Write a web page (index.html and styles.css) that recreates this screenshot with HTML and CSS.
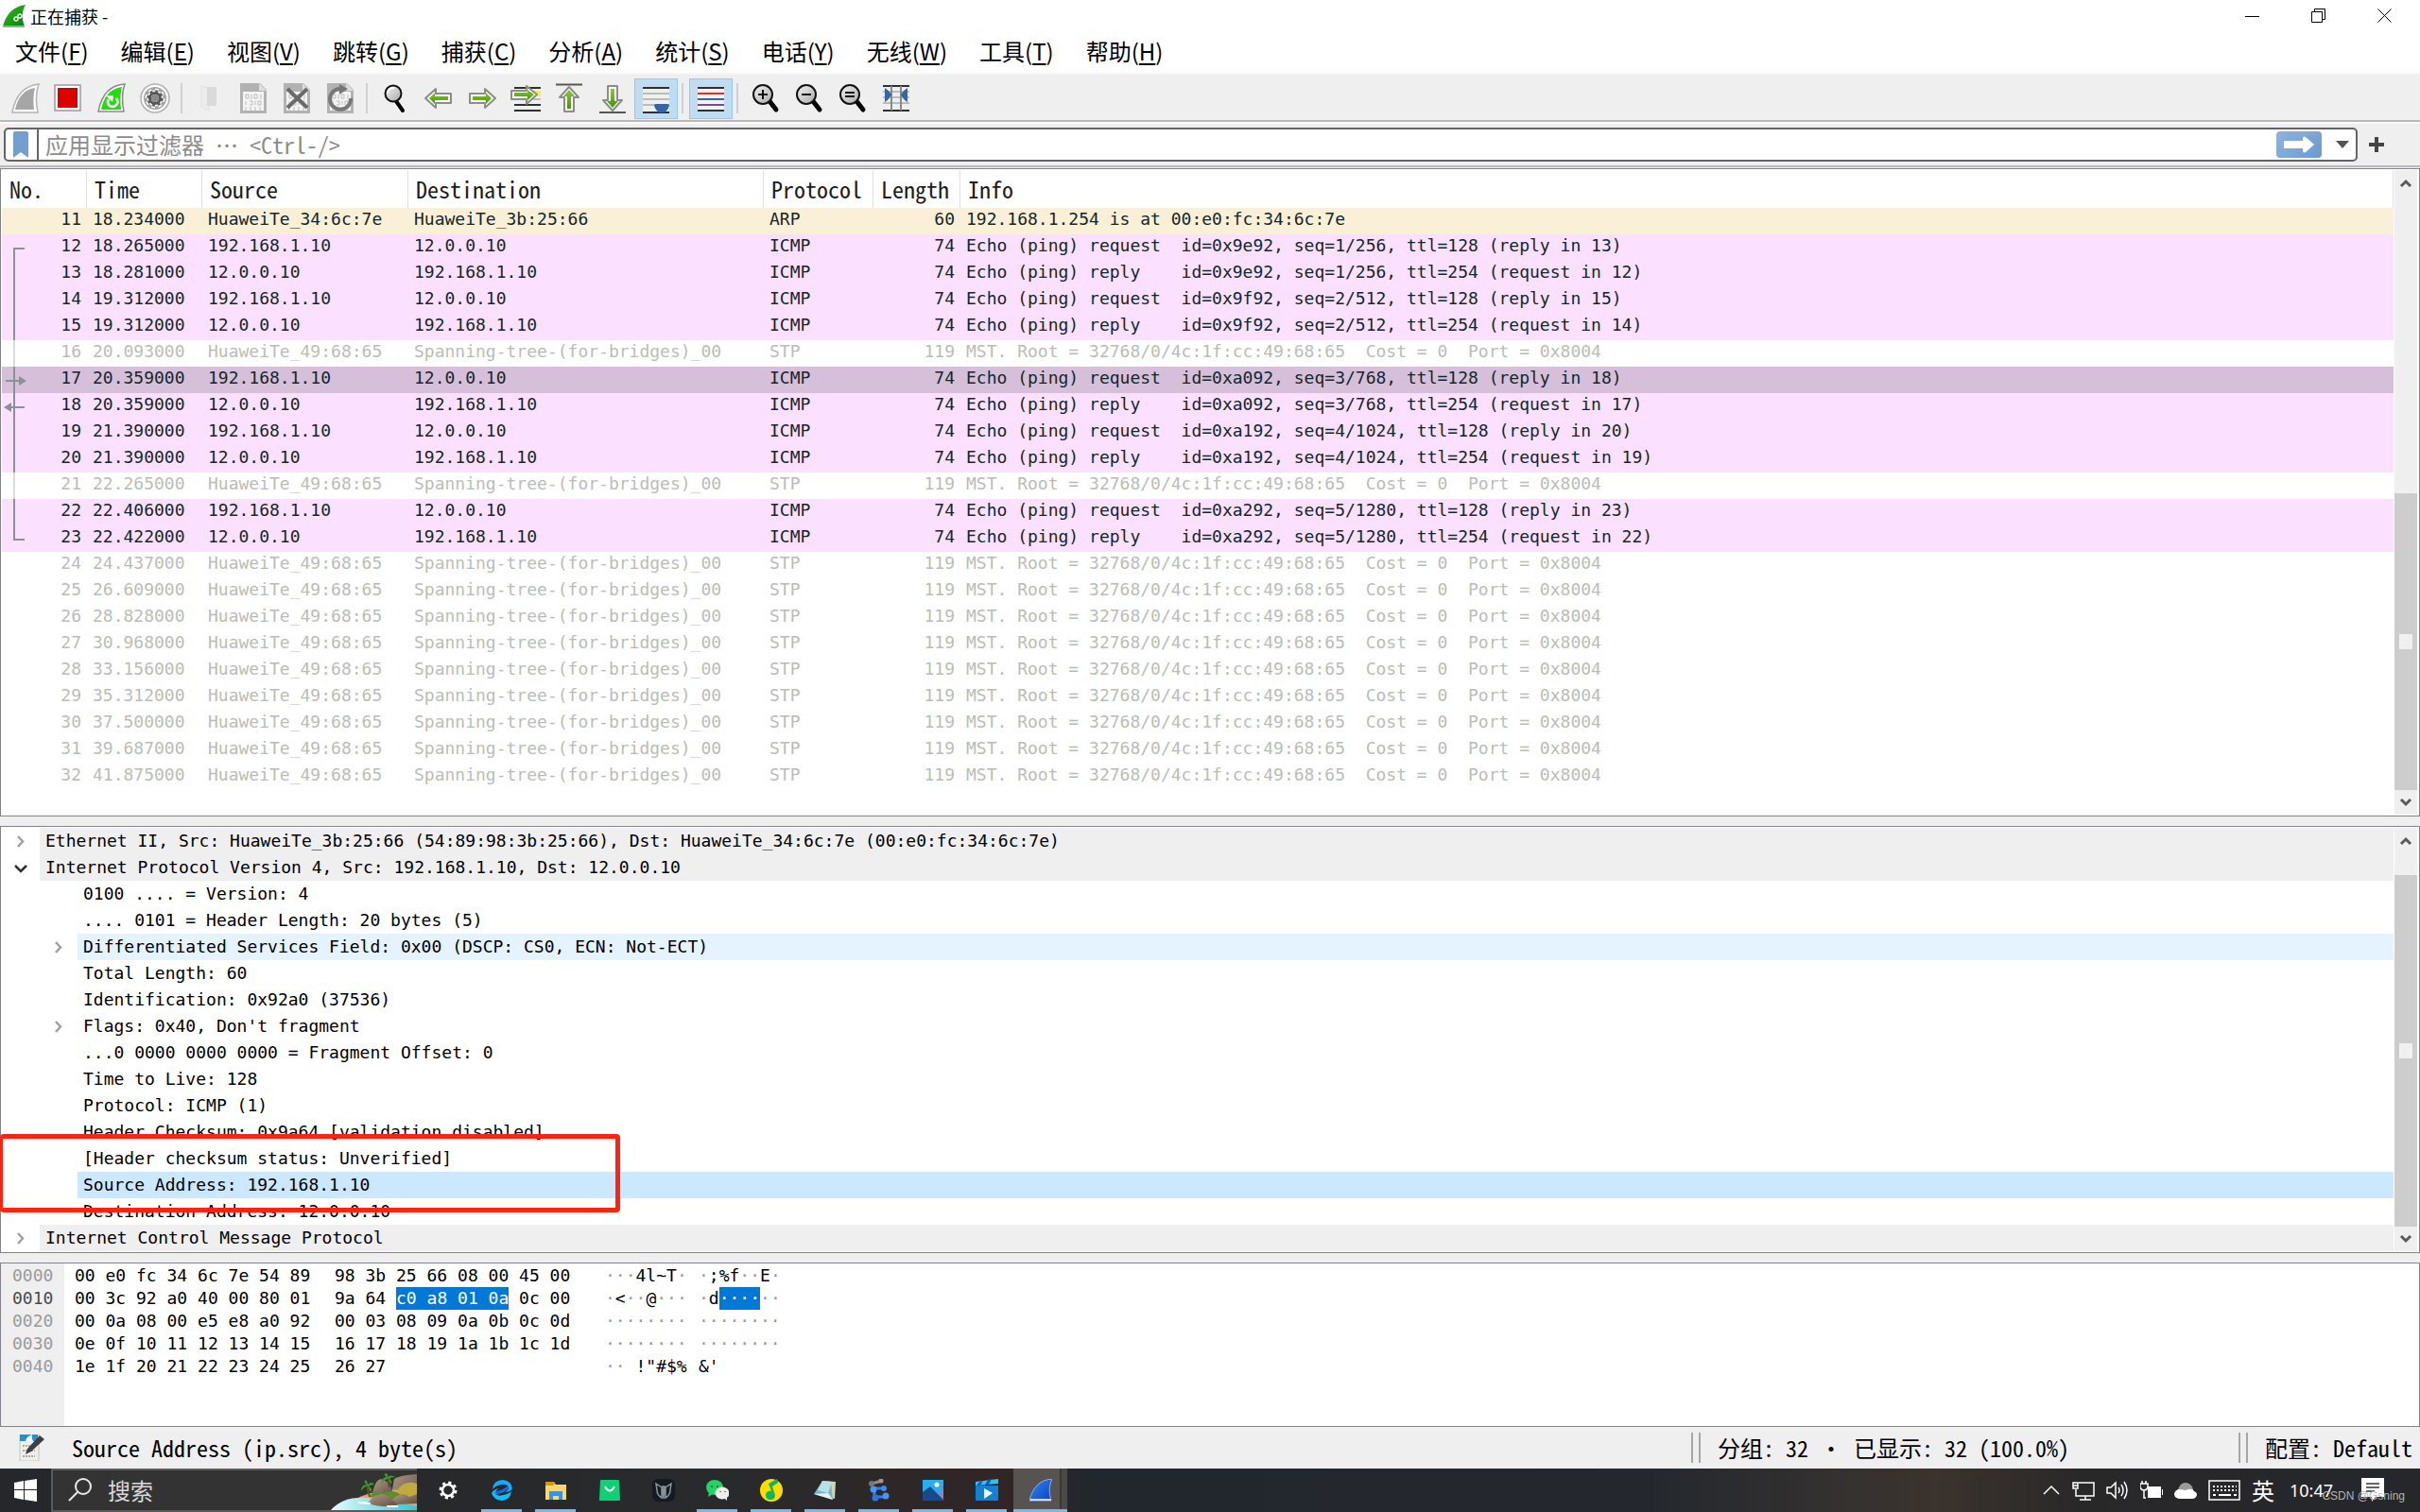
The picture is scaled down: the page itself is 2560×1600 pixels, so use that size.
FILE: index.html
```html
<!DOCTYPE html>
<html lang="zh-CN">
<head>
<meta charset="utf-8">
<title>正在捕获 -</title>
<link rel="stylesheet" href="styles.css">
</head>
<body>
<svg class="defs" aria-hidden="true">
  <defs>
    <linearGradient id="green" x1="0" y1="0" x2="0" y2="1"><stop offset="0" stop-color="#8fc43c"/><stop offset="1" stop-color="#3f9a00"/></linearGradient>
    <linearGradient id="lens" x1="0" y1="0" x2="1" y2="1"><stop offset="0" stop-color="#f4f4f4"/><stop offset="1" stop-color="#a8a8a8"/></linearGradient>
    <linearGradient id="finGreen" x1="0" y1="0" x2="1" y2="1"><stop offset="0" stop-color="#2fc21a"/><stop offset="1" stop-color="#0a7a12"/></linearGradient>
    <linearGradient id="finBlue" x1="0" y1="0" x2="1" y2="1"><stop offset="0" stop-color="#2f8af5"/><stop offset="1" stop-color="#0a3fc0"/></linearGradient>
    <linearGradient id="sea" x1="0" y1="0" x2="1" y2="0"><stop offset="0" stop-color="#e8fbfb"/><stop offset="1" stop-color="#2fc7d3"/></linearGradient>
    <linearGradient id="rock" x1="0" y1="0" x2="1" y2="1"><stop offset="0" stop-color="#b09a86"/><stop offset="1" stop-color="#5f4c40"/></linearGradient>
    <symbol id="up" viewBox="0 0 24 26"><path d="M7 17l5-5 5 5" fill="none" stroke="#5a5a5a" stroke-width="3"/></symbol>
    <symbol id="down" viewBox="0 0 24 26"><path d="M7 10l5 5 5-5" fill="none" stroke="#5a5a5a" stroke-width="3"/></symbol>
    <symbol id="closed" viewBox="0 0 20 28"><path d="M7 9l5 5.500-5 5.500" fill="none" stroke="#a0a0a0" stroke-width="2.500"/></symbol>
    <symbol id="open" viewBox="0 0 20 28"><path d="M4 12l6 6 6-6" fill="none" stroke="#303030" stroke-width="2.500"/></symbol>
    <symbol id="page" viewBox="0 0 32 32"><path d="M5 0h18l7 7v25H2V0z" fill="#b2b2b2"/><path d="M5 9h22v20H5z" fill="#f4f4f4"/><path d="M22 0l8 8h-8z" fill="#dedede"/><path d="M8 12h3v4H8zM14 12v5M17 12h3v4h-3zM24 12v5M8 19v4M12 19h3v4h-3M18 19v4M21 19h3v4h-3zM8 25v4M13 25v4M18 25v4M23 25v4" fill="none" stroke="#bcbcbc"/></symbol>
    <symbol id="glass" viewBox="0 0 32 32"><path d="M20 19l7 9" stroke="#000" stroke-width="5" stroke-linecap="round"/><circle cx="13" cy="12" r="10" fill="url(#lens)" stroke="#111" stroke-width="2"/></symbol>
  </defs>
</svg>

<header class="titlebar">
  <svg class="app-icon" viewBox="0 0 26 26"><path d="M1 24C4 12 11 3 25 1c-4 6-4 15-1 23z" fill="url(#finGreen)"/><path d="M1 24h23" stroke="#9aa79a" stroke-width="2"/><circle cx="15" cy="16" r="2" fill="none" stroke="#e4f4e4" stroke-width="1.500"/><circle cx="19" cy="13" r="2" fill="none" stroke="#e4f4e4" stroke-width="1.500"/></svg>
  <h1 class="title">正在捕获 -</h1>
  <div class="window-controls">
    <button class="win-btn" aria-label="最小化"><svg viewBox="0 0 16 16"><path d="M0 8.500h15" stroke="#000"/></svg></button>
    <button class="win-btn" aria-label="还原"><svg viewBox="0 0 16 16"><path d="M.5 3.500h11v11H.5zM3.500 3.500V.5h11v11h-3" fill="none" stroke="#000"/></svg></button>
    <button class="win-btn" aria-label="关闭"><svg viewBox="0 0 16 16"><path d="M.5 .5l14 14M14.500 .5l-14 14" stroke="#000"/></svg></button>
  </div>
</header>

<nav class="menubar">
  <button>文件(<u>F</u>)</button><button>编辑(<u>E</u>)</button><button>视图(<u>V</u>)</button><button>跳转(<u>G</u>)</button><button>捕获(<u>C</u>)</button><button>分析(<u>A</u>)</button><button>统计(<u>S</u>)</button><button>电话(<u>Y</u>)</button><button>无线(<u>W</u>)</button><button>工具(<u>T</u>)</button><button>帮助(<u>H</u>)</button>
</nav>

<div class="toolbar" role="toolbar">
  <button aria-label="开始捕获"><svg viewBox="0 0 32 32"><path d="M3 31C6 14 14 3 31 1c-3 8-3 20-1 30z" fill="#fff" stroke="#b4b4b4" stroke-width="1.500"/><path d="M6 28C9 15 15 7 27 5c-2 7-2 15-1 23z" fill="#a6a6a6"/></svg></button>
  <button aria-label="停止捕获"><svg viewBox="0 0 32 32"><path d="M2 2h27v27H2z" fill="#fff" stroke="#9a9a9a" stroke-width="1.500"/><path d="M5 5h21v21H5z" fill="#dc0000"/></svg></button>
  <button aria-label="重新开始捕获"><svg viewBox="0 0 32 32"><path d="M2 30C5 14 13 2 30 1c-3 8-3 19-1 29z" fill="#fff" stroke="#8a8a8a" stroke-width="1.500"/><path d="M5 28C8 14 14 6 27 4c-2 7-2 16-1 24z" fill="#25dc12"/><path d="M21 16q3 4 0 7-4 4-8 0-2-3 0-6" fill="none" stroke="#fff" stroke-width="2.500"/><path d="M10 13h8l-1 7z" fill="#fff"/></svg></button>
  <button aria-label="捕获选项"><svg viewBox="0 0 32 32"><circle cx="16" cy="16" r="15" fill="#fff" stroke="#b0b0b0" stroke-width="1.500"/><circle cx="16" cy="16" r="12" fill="#a3a3a3"/><circle cx="16" cy="16" r="8.500" fill="#fff"/><circle cx="16" cy="16" r="9" fill="none" stroke="#fff" stroke-width="3" stroke-dasharray="3.530 3.530"/><circle cx="16" cy="16" r="5.500" fill="none" stroke="#585858" stroke-width="3"/><circle cx="16" cy="16" r="7.500" fill="none" stroke="#585858" stroke-width="2.500" stroke-dasharray="2.950 2.950"/><circle cx="16" cy="16" r="4" fill="#8a8a8a"/></svg></button>
  <span class="sep"></span>
  <button aria-label="打开" disabled><svg viewBox="0 0 32 32"><path d="M7 3l8 2v24l-8-4z" fill="#ececec" stroke="#e0e0e0"/><path d="M13 4h10v20H13z" fill="#dadada"/></svg></button>
  <button aria-label="保存" disabled><svg viewBox="0 0 32 32"><use href="#page"/></svg></button>
  <button aria-label="关闭文件"><svg viewBox="0 0 32 32"><use href="#page"/><path d="M6 6l21 20M27 6L6 26" stroke="#6a6a6a" stroke-width="4"/></svg></button>
  <button aria-label="重新加载"><svg viewBox="0 0 32 32"><use href="#page"/><path d="M27 16a11 11 0 1 1-9-10" fill="none" stroke="#777" stroke-width="4"/><path d="M15 1l9 5-9 6z" fill="#777"/></svg></button>
  <span class="sep"></span>
  <button aria-label="查找分组"><svg viewBox="0 0 32 32"><path d="M17 19l7 10" stroke="#000" stroke-width="4" stroke-linecap="round"/><circle cx="14" cy="11" r="8.500" fill="url(#lens)" stroke="#111" stroke-width="2"/><path d="M8 11a6 6 0 0 1 7-6" fill="none" stroke="#fff" stroke-width="2"/></svg></button>
  <button aria-label="后退"><svg viewBox="0 0 32 32"><path d="M2 16L13 6v5h16v10H13v5z" fill="#fff" stroke="#8b8d87" stroke-width="2" stroke-linejoin="round"/><path d="M6 16l6-6v4h14v4H12v4z" fill="url(#green)"/></svg></button>
  <button aria-label="前进"><svg viewBox="0 0 32 32"><path d="M30 16L19 6v5H3v10h16v5z" fill="#fff" stroke="#8b8d87" stroke-width="2" stroke-linejoin="round"/><path d="M26 16l-6-6v4H6v4h14v4z" fill="url(#green)"/></svg></button>
  <button aria-label="转到分组"><svg viewBox="0 0 32 32"><path d="M4 5h28M4 23h28M4 29h28" stroke="#2c3234" stroke-width="2"/><path d="M20 8h12v6H20z" fill="#fce94f"/><path d="M4 17h28" stroke="#b9bdb5" stroke-width="2"/><path d="M28 12L17 3v5H1v9h16v5z" fill="#fff" stroke="#8b8d87" stroke-width="2" stroke-linejoin="round"/><path d="M25 12l-7-5v3H4v4h14v4z" fill="url(#green)"/></svg></button>
  <button aria-label="首个分组"><svg viewBox="0 0 32 32"><path d="M2 1.500h28" stroke="#555753" stroke-width="2"/><path d="M16 4l10 11h-5v15H11V15H6z" fill="#fff" stroke="#8b8d87" stroke-width="2" stroke-linejoin="round"/><path d="M16 7l6 7h-4v13h-4V14h-4z" fill="url(#green)"/></svg></button>
  <button aria-label="最新分组"><svg viewBox="0 0 32 32"><path d="M2 31h28" stroke="#555753" stroke-width="2"/><path d="M16 29L6 18h5V3h10v15h5z" fill="#fff" stroke="#8b8d87" stroke-width="2" stroke-linejoin="round"/><path d="M16 26l-6-7h4V6h4v13h4z" fill="url(#green)"/></svg></button>
  <button class="on" aria-label="自动滚动" aria-pressed="true"><svg viewBox="0 0 32 32"><path d="M2 4h28v26H2z" fill="#eef0ee"/><path d="M2 5h28M2 31h28" stroke="#2c3234" stroke-width="2"/><path d="M2 11h28M2 17h28M2 23h28" stroke="#b9bdb5" stroke-width="2"/><path d="M14 24q0-2 2-2h12q2 0 2 2-1 4-5 7h-6q-4-3-5-7z" fill="#3465a4"/></svg></button>
  <span class="sep"></span>
  <button class="on" aria-label="着色" aria-pressed="true"><svg viewBox="0 0 32 32"><path d="M2 4h28v26H2z" fill="#f2f2f0"/><path d="M2 5h28M2 29h28" stroke="#2c3234" stroke-width="2"/><path d="M2 11h28" stroke="#ef2929" stroke-width="2"/><path d="M2 17h28" stroke="#3465a4" stroke-width="2"/><path d="M2 23h28" stroke="#75507b" stroke-width="2"/></svg></button>
  <span class="sep"></span>
  <button aria-label="放大"><svg viewBox="0 0 32 32"><use href="#glass"/><path d="M8 12h10M13 7v10" stroke="#111" stroke-width="2"/></svg></button>
  <button aria-label="缩小"><svg viewBox="0 0 32 32"><use href="#glass"/><path d="M8 12h10" stroke="#111" stroke-width="2"/></svg></button>
  <button aria-label="原始大小"><svg viewBox="0 0 32 32"><use href="#glass"/><path d="M8 10h10M8 14h10" stroke="#111" stroke-width="2"/></svg></button>
  <button aria-label="调整列宽"><svg viewBox="0 0 32 32"><path d="M2 3h28M2 29h28" stroke="#2c3234" stroke-width="2"/><path d="M2 9h28M2 15h28M2 21h28" stroke="#b9bdb5" stroke-width="2"/><path d="M11 3v26M21 3v26" stroke="#888a85" stroke-width="2"/><path d="M4 5q5 3 7 7-2 5-7 8zM28 5q-5 3-7 7 2 5 7 8z" fill="#3465a4"/></svg></button>
</div>

<form class="filterbar">
  <div class="filter">
    <button type="button" class="bookmark" aria-label="书签"><svg viewBox="0 0 16 28"><path d="M0 2q0-2 2-2h12q2 0 2 2v26l-8-6-8 6z" fill="#729fcf"/></svg></button>
    <input type="text" class="filter-input" aria-label="显示过滤器" placeholder="应用显示过滤器 ⋯ &lt;Ctrl-/&gt;">
    <button type="button" class="apply" aria-label="应用"><svg viewBox="0 0 48 28"><path d="M9 10h19V7q1-3 4 0l7 6q2 1 0 2l-7 6q-3 3-4 0v-3H9q-1 0-1-1v-6q0-1 1-1z" fill="#fff"/></svg></button>
    <button type="button" class="recent" aria-label="最近的过滤器"><svg viewBox="0 0 14 8"><path d="M0 0h14L7 8z" fill="#555"/></svg></button>
  </div>
  <button type="button" class="add" aria-label="添加过滤器"><svg viewBox="0 0 16 16"><path d="M6 0h4v6h6v4h-6v6H6v-6H0V6h6z" fill="#444"/></svg></button>
</form>

<main class="panes">
  <section class="pane list">
    <div class="scroller">
      <table class="packets">
        <colgroup><col class="c-no"><col class="c-time"><col class="c-src"><col class="c-dst"><col class="c-proto"><col class="c-len"><col></colgroup>
        <thead><tr><th>No.</th><th>Time</th><th>Source</th><th>Destination</th><th>Protocol</th><th>Length</th><th>Info</th></tr></thead>
        <tbody>
          <tr class="arp"><td>11</td><td>18.234000</td><td>HuaweiTe_34:6c:7e</td><td>HuaweiTe_3b:25:66</td><td>ARP</td><td>60</td><td>192.168.1.254 is at 00:e0:fc:34:6c:7e</td></tr>
          <tr class="icmp"><td>12</td><td>18.265000</td><td>192.168.1.10</td><td>12.0.0.10</td><td>ICMP</td><td>74</td><td>Echo (ping) request  id=0x9e92, seq=1/256, ttl=128 (reply in 13)</td></tr>
          <tr class="icmp"><td>13</td><td>18.281000</td><td>12.0.0.10</td><td>192.168.1.10</td><td>ICMP</td><td>74</td><td>Echo (ping) reply    id=0x9e92, seq=1/256, ttl=254 (request in 12)</td></tr>
          <tr class="icmp"><td>14</td><td>19.312000</td><td>192.168.1.10</td><td>12.0.0.10</td><td>ICMP</td><td>74</td><td>Echo (ping) request  id=0x9f92, seq=2/512, ttl=128 (reply in 15)</td></tr>
          <tr class="icmp"><td>15</td><td>19.312000</td><td>12.0.0.10</td><td>192.168.1.10</td><td>ICMP</td><td>74</td><td>Echo (ping) reply    id=0x9f92, seq=2/512, ttl=254 (request in 14)</td></tr>
          <tr class="stp"><td>16</td><td>20.093000</td><td>HuaweiTe_49:68:65</td><td>Spanning-tree-(for-bridges)_00</td><td>STP</td><td>119</td><td>MST. Root = 32768/0/4c:1f:cc:49:68:65  Cost = 0  Port = 0x8004</td></tr>
          <tr class="icmp current"><td>17</td><td>20.359000</td><td>192.168.1.10</td><td>12.0.0.10</td><td>ICMP</td><td>74</td><td>Echo (ping) request  id=0xa092, seq=3/768, ttl=128 (reply in 18)</td></tr>
          <tr class="icmp"><td>18</td><td>20.359000</td><td>12.0.0.10</td><td>192.168.1.10</td><td>ICMP</td><td>74</td><td>Echo (ping) reply    id=0xa092, seq=3/768, ttl=254 (request in 17)</td></tr>
          <tr class="icmp"><td>19</td><td>21.390000</td><td>192.168.1.10</td><td>12.0.0.10</td><td>ICMP</td><td>74</td><td>Echo (ping) request  id=0xa192, seq=4/1024, ttl=128 (reply in 20)</td></tr>
          <tr class="icmp"><td>20</td><td>21.390000</td><td>12.0.0.10</td><td>192.168.1.10</td><td>ICMP</td><td>74</td><td>Echo (ping) reply    id=0xa192, seq=4/1024, ttl=254 (request in 19)</td></tr>
          <tr class="stp"><td>21</td><td>22.265000</td><td>HuaweiTe_49:68:65</td><td>Spanning-tree-(for-bridges)_00</td><td>STP</td><td>119</td><td>MST. Root = 32768/0/4c:1f:cc:49:68:65  Cost = 0  Port = 0x8004</td></tr>
          <tr class="icmp"><td>22</td><td>22.406000</td><td>192.168.1.10</td><td>12.0.0.10</td><td>ICMP</td><td>74</td><td>Echo (ping) request  id=0xa292, seq=5/1280, ttl=128 (reply in 23)</td></tr>
          <tr class="icmp"><td>23</td><td>22.422000</td><td>12.0.0.10</td><td>192.168.1.10</td><td>ICMP</td><td>74</td><td>Echo (ping) reply    id=0xa292, seq=5/1280, ttl=254 (request in 22)</td></tr>
          <tr class="stp"><td>24</td><td>24.437000</td><td>HuaweiTe_49:68:65</td><td>Spanning-tree-(for-bridges)_00</td><td>STP</td><td>119</td><td>MST. Root = 32768/0/4c:1f:cc:49:68:65  Cost = 0  Port = 0x8004</td></tr>
          <tr class="stp"><td>25</td><td>26.609000</td><td>HuaweiTe_49:68:65</td><td>Spanning-tree-(for-bridges)_00</td><td>STP</td><td>119</td><td>MST. Root = 32768/0/4c:1f:cc:49:68:65  Cost = 0  Port = 0x8004</td></tr>
          <tr class="stp"><td>26</td><td>28.828000</td><td>HuaweiTe_49:68:65</td><td>Spanning-tree-(for-bridges)_00</td><td>STP</td><td>119</td><td>MST. Root = 32768/0/4c:1f:cc:49:68:65  Cost = 0  Port = 0x8004</td></tr>
          <tr class="stp"><td>27</td><td>30.968000</td><td>HuaweiTe_49:68:65</td><td>Spanning-tree-(for-bridges)_00</td><td>STP</td><td>119</td><td>MST. Root = 32768/0/4c:1f:cc:49:68:65  Cost = 0  Port = 0x8004</td></tr>
          <tr class="stp"><td>28</td><td>33.156000</td><td>HuaweiTe_49:68:65</td><td>Spanning-tree-(for-bridges)_00</td><td>STP</td><td>119</td><td>MST. Root = 32768/0/4c:1f:cc:49:68:65  Cost = 0  Port = 0x8004</td></tr>
          <tr class="stp"><td>29</td><td>35.312000</td><td>HuaweiTe_49:68:65</td><td>Spanning-tree-(for-bridges)_00</td><td>STP</td><td>119</td><td>MST. Root = 32768/0/4c:1f:cc:49:68:65  Cost = 0  Port = 0x8004</td></tr>
          <tr class="stp"><td>30</td><td>37.500000</td><td>HuaweiTe_49:68:65</td><td>Spanning-tree-(for-bridges)_00</td><td>STP</td><td>119</td><td>MST. Root = 32768/0/4c:1f:cc:49:68:65  Cost = 0  Port = 0x8004</td></tr>
          <tr class="stp"><td>31</td><td>39.687000</td><td>HuaweiTe_49:68:65</td><td>Spanning-tree-(for-bridges)_00</td><td>STP</td><td>119</td><td>MST. Root = 32768/0/4c:1f:cc:49:68:65  Cost = 0  Port = 0x8004</td></tr>
          <tr class="stp"><td>32</td><td>41.875000</td><td>HuaweiTe_49:68:65</td><td>Spanning-tree-(for-bridges)_00</td><td>STP</td><td>119</td><td>MST. Root = 32768/0/4c:1f:cc:49:68:65  Cost = 0  Port = 0x8004</td></tr>
        </tbody>
      </table>
      <svg class="related" viewBox="0 0 30 364" aria-hidden="true">
        <path d="M24 43H13V140M13 168V280M13 308V351H24M4 183h14M24 211H8" fill="none" stroke="#8a9298" stroke-width="2"/>
        <path d="M13 140v28M13 280v28" stroke="#dcdcdc" stroke-width="2"/>
        <path d="M18 178l8 5-8 5zM10 206l-8 5 8 5z" fill="#8a9298"/>
      </svg>
    </div>
    <div class="scrollbar list-scroll"><svg class="arrow"><use href="#up"/></svg><div class="thumb"><i></i></div><svg class="arrow"><use href="#down"/></svg></div>
  </section>

  <section class="pane details">
    <ul class="tree">
      <li class="top"><svg><use href="#closed"/></svg><span>Ethernet II, Src: HuaweiTe_3b:25:66 (54:89:98:3b:25:66), Dst: HuaweiTe_34:6c:7e (00:e0:fc:34:6c:7e)</span></li>
      <li class="top"><svg><use href="#open"/></svg><span>Internet Protocol Version 4, Src: 192.168.1.10, Dst: 12.0.0.10</span></li>
      <li class="sub"><span>0100 .... = Version: 4</span></li>
      <li class="sub"><span>.... 0101 = Header Length: 20 bytes (5)</span></li>
      <li class="sub hover"><svg><use href="#closed"/></svg><span>Differentiated Services Field: 0x00 (DSCP: CS0, ECN: Not-ECT)</span></li>
      <li class="sub"><span>Total Length: 60</span></li>
      <li class="sub"><span>Identification: 0x92a0 (37536)</span></li>
      <li class="sub"><svg><use href="#closed"/></svg><span>Flags: 0x40, Don't fragment</span></li>
      <li class="sub"><span>...0 0000 0000 0000 = Fragment Offset: 0</span></li>
      <li class="sub"><span>Time to Live: 128</span></li>
      <li class="sub"><span>Protocol: ICMP (1)</span></li>
      <li class="sub"><span>Header Checksum: 0x9a64 [validation disabled]</span></li>
      <li class="sub"><span>[Header checksum status: Unverified]</span></li>
      <li class="sub selected"><span>Source Address: 192.168.1.10</span></li>
      <li class="sub"><span>Destination Address: 12.0.0.10</span></li>
      <li class="top"><svg><use href="#closed"/></svg><span>Internet Control Message Protocol</span></li>
    </ul>
    <div class="scrollbar detail-scroll"><svg class="arrow"><use href="#up"/></svg><div class="thumb"><i></i></div><svg class="arrow"><use href="#down"/></svg></div>
    <div class="callout"></div>
  </section>

  <section class="pane bytes">
    <table class="hex">
      <tbody>
        <tr><th>0000</th><td>00 e0 fc 34 6c 7e 54 89</td><td>98 3b 25 66 08 00 45 00</td><td><s>···</s>4l~T<s>·</s></td><td><s>·</s>;%f<s>··</s>E<s>·</s></td></tr>
        <tr><th class="cur">0010</th><td>00 3c 92 a0 40 00 80 01</td><td>9a 64 <mark>c0 a8 01 0a</mark> 0c 00</td><td><s>·</s>&lt;<s>··</s>@<s>···</s></td><td><s>·</s>d<mark>····</mark><s>··</s></td></tr>
        <tr><th>0020</th><td>00 0a 08 00 e5 e8 a0 92</td><td>00 03 08 09 0a 0b 0c 0d</td><td><s>········</s></td><td><s>········</s></td></tr>
        <tr><th>0030</th><td>0e 0f 10 11 12 13 14 15</td><td>16 17 18 19 1a 1b 1c 1d</td><td><s>········</s></td><td><s>········</s></td></tr>
        <tr><th>0040</th><td>1e 1f 20 21 22 23 24 25</td><td>26 27</td><td><s>··</s> !"#$%</td><td>&amp;'</td></tr>
      </tbody>
    </table>
  </section>
</main>

<footer class="statusbar">
  <button class="comment" aria-label="编辑注释"><svg viewBox="0 0 28 28"><path d="M1 0h20v28H1z" fill="#f0f0e8" stroke="#c4c4bc"/><path d="M1 0h19v7H1z" fill="#2a8fc8"/><path d="M7 7q1-5 7-7-1 4 1 7z" fill="#fff"/><path d="M4 12h13M4 17h13M4 23h13" stroke="#aaa" stroke-width="2" stroke-dasharray="2 1"/><path d="M22 1l5 4-14 13-6 3 2-6z" fill="#3c4043"/></svg></button>
  <span class="field">Source Address (ip.src), 4 byte(s)</span>
  <span class="counts">分组: 32 <b>•</b> 已显示: 32 (100.0%)</span>
  <span class="profile">配置: Default</span>
</footer>

<nav class="taskbar">
  <button class="start" aria-label="开始"><svg viewBox="0 0 24 24"><path d="M0 4l10-2v9H0zM11 2l13-2v11H11zM0 12h10v10L0 20zM11 12h13v12l-13-2z" fill="#fff"/></svg></button>
  <button class="search"><svg class="lens" viewBox="0 0 26 26"><circle cx="16" cy="9" r="8" fill="none" stroke="#e8e8e8" stroke-width="2"/><path d="M10 15L1 24" stroke="#e8e8e8" stroke-width="2"/></svg><span>搜索</span>
    <svg class="island" viewBox="0 0 92 42"><path d="M68 9q6-4 24-5v38H62z" fill="url(#rock)"/><path d="M28 30q20-12 64-9v21H20z" fill="#dba67c"/><path d="M1 42Q14 27 40 29l30 5 22 4v4z" fill="url(#sea)"/><path d="M45 24q4-18 12-14 9 4 10 18z" fill="url(#rock)"/><path d="M72 20q8-10 20-6v14H66z" fill="#c2ab3c"/><path d="M42 28q4-9 14-4 12-5 20 3l-6 6z" fill="#5c8f26"/><path d="M40 35q6-10 16-10 9 2 17 11-12 5-33-1z" fill="url(#rock)"/><path d="M66 31q10-10 18-3l8-3v10l-20 1z" fill="url(#rock)"/><path d="M39 16l3 12M61 8l2 10" stroke="#6b4a25" stroke-width="2"/><path d="M33 22q0-7 6-7-4-3-1-5 2 2 2 5 4-4 7 0-5 0-6 2 4 2 3 6-3-2-4-7-4 1-7 6zM54 14q0-6 6-7-4-3-1-4 3 1 2 4 4-3 8 0-5 0-6 2 3 2 2 6-3-3-3-7-4 2-8 6z" fill="#35a22c"/><path d="M30 34l13 1M60 38h12" stroke="#fff" stroke-width="2"/></svg>
  </button>
  <div class="apps">
    <button aria-label="设置"><svg viewBox="0 0 24 24"><circle cx="12" cy="12" r="6" fill="none" stroke="#fff" stroke-width="2.500"/><circle cx="12" cy="12" r="8" fill="none" stroke="#fff" stroke-width="3" stroke-dasharray="3.140 3.140"/></svg></button>
    <button class="running" aria-label="浏览器"><svg viewBox="0 0 24 24"><path d="M2 11Q3 1 13 1q9 1 10 9-2 4-8 4 3-1 4-4-1-5-8-4-6 1-9 5z" fill="#18a8ff"/><path d="M22 13q-1 9-10 10Q3 22 1 15q2-4 8-5-4 2-4 5 2 4 8 2 6-1 9-4z" fill="#12bdf8"/><path d="M5 15Q12 14 19 9" stroke="#0a6fe0" stroke-width="3" fill="none"/></svg></button>
    <button class="running" aria-label="文件资源管理器"><svg viewBox="0 0 24 24"><path d="M1 3h9l2 3h11v16H1z" fill="#ffd766"/><path d="M1 3h9l1 2-2 2H1z" fill="#dc9604"/><path d="M5 22v-9h14v9h-4v-4H9v4z" fill="#3c92dd"/></svg></button>
    <button aria-label="应用商店"><svg viewBox="0 0 24 24"><path d="M2 2q0-1 1-1h17q2 0 2 1l1 20q0 1-1 1H2q-1 0-1-1z" fill="#10cf74"/><path d="M7 8q5 9 10 0" fill="none" stroke="#fff" stroke-width="2"/></svg></button>
    <button aria-label="游戏"><svg viewBox="0 0 24 24"><rect width="24" height="24" rx="6" fill="#151a22"/><path d="M4 5l6 4v11q-5-3-5-8zM20 5l-6 4v11q5-3 5-8zM11 8h2l-1 13z" fill="none" stroke="#8c9298" stroke-width="1.500"/></svg></button>
    <button class="running" aria-label="微信"><svg viewBox="0 0 24 24"><ellipse cx="9" cy="9" rx="9" ry="8" fill="#22d366"/><path d="M3 14l-1 5 5-3z" fill="#22d366"/><ellipse cx="17" cy="15" rx="7.500" ry="6.500" fill="#ededed"/><path d="M19 20l3 3v-4z" fill="#ededed"/><path d="M5 7h2v2H5zM11 7h2v2h-2z" fill="#157a3b"/><path d="M14 13h2v1h-2zM19 13h2v1h-2z" fill="#777"/></svg></button>
    <button class="running" aria-label="音乐"><svg viewBox="0 0 24 24"><circle cx="12" cy="12" r="12" fill="#ffdc00"/><path d="M9 5l9-5 1 4-6 4 3 9q0 5-5 5t-5-5q1-5 6-4z" fill="#12b362"/></svg></button>
    <button class="running" aria-label="记事本"><svg viewBox="0 0 24 24"><path d="M9 2l14 1-1 18-4-1z" fill="#d8d3b6"/><path d="M9 2l9 1 2 19L0 16z" fill="#72b9c4"/><path d="M9 2l10 1-4 12L4 12z" fill="#b6e2e6"/><path d="M0 16l15-1 5 7z" fill="#e9f0f0"/></svg></button>
    <button class="running" aria-label="网络模拟器"><svg viewBox="0 0 24 24"><path d="M4 5l11-3" stroke="#8b8b8b" stroke-width="3"/><circle cx="4" cy="5" r="3" fill="#777"/><circle cx="14" cy="2" r="2.500" fill="#999"/><path d="M17 10H7v9h12" fill="none" stroke="#2f7fe6" stroke-width="3"/><circle cx="6" cy="11" r="3.500" fill="#4697f5"/><circle cx="17" cy="10" r="3" fill="#3b8bf0"/><circle cx="8" cy="20" r="3.500" fill="#2d77dc"/><circle cx="19" cy="18" r="3.500" fill="#4697f5"/></svg></button>
    <button class="running" aria-label="照片"><svg viewBox="0 0 24 24"><path d="M1 1h22v22H1z" fill="#28aeef"/><path d="M23 9v14H11z" fill="#7d88db"/><path d="M1 14l8-6 15 15H1z" fill="#174a8c"/><circle cx="16" cy="6" r="2.500" fill="#fff"/></svg></button>
    <button class="running" aria-label="电影和电视"><svg viewBox="0 0 24 24"><path d="M0 7h24v15q0 1-1 1H1q-1 0-1-1z" fill="#1380d8"/><path d="M0 3l24-3v5L0 7z" fill="#31c3f0"/><path d="M4 3l4-1-3 5H1zM13 1l4-1-3 6h-4z" fill="#0a62b0"/><path d="M9 10l9 5-9 6z" fill="#fff"/></svg></button>
    <button class="running active" aria-label="Wireshark"><svg viewBox="0 0 24 24"><path d="M0 23C3 10 10 1 24 0c-4 8-3 16-1 23z" fill="url(#finBlue)" stroke="#8fb0ea"/><path d="M1 22h22" stroke="#cfd8ee" stroke-width="2"/></svg></button>
  </div>
  <div class="tray">
    <button class="t-chevron" aria-label="显示隐藏的图标"><svg viewBox="0 0 20 24"><path d="M2 16l8-8 8 8" fill="none" stroke="#fff" stroke-width="1.500"/></svg></button>
    <svg class="t-net" viewBox="0 0 24 24"><path d="M7 4h16v14H4V11M14 18v4M8 22h12M1 4h5v6H1zM1 7h5" fill="none" stroke="#fff" stroke-width="1.500"/></svg>
    <svg class="t-vol" viewBox="0 0 24 24"><path d="M1 9h4l5-5v16l-5-5H1z" fill="none" stroke="#fff" stroke-width="1.500"/><path d="M13 9q2 3 0 6M16 6q4 6 0 12M19 3q6 9 0 18" fill="none" stroke="#fff" stroke-width="1.500"/></svg>
    <svg class="t-bat" viewBox="0 0 24 24"><path d="M2 2v3M6 2v3M0 5h8v4q-1 3-4 3t-4-3zM4 12v8h2" fill="none" stroke="#fff" stroke-width="1.500"/><path d="M8 8h14v12H8zM23 11h1v6h-1z" fill="#fff"/></svg>
    <svg class="t-cloud" viewBox="0 0 24 24"><path d="M4 12Q6 3 13 4q6 1 7 8z" fill="#9a9a9a"/><path d="M5 21q-5-1-5-5 1-5 6-5l6 1q7-3 9 1 3 1 3 4-1 4-5 4z" fill="#fff"/></svg>
    <svg class="t-kbd" viewBox="0 0 34 24"><path d="M1 2h32v20H1z" fill="none" stroke="#fff" stroke-width="1.500"/><path d="M5 8h25M5 12h25" stroke="#fff" stroke-width="2" stroke-dasharray="2 2"/><path d="M5 17h3M11 17h13M27 17h3" stroke="#fff" stroke-width="2"/></svg>
    <button class="ime">英</button>
    <time class="clock">10:47</time>
    <svg class="note" viewBox="0 0 24 26"><path d="M0 0h24v20h-9l-4 5v-5H0z" fill="#fff"/><path d="M5 6h14M5 10h14M5 14h9" stroke="#333" stroke-width="1.500"/></svg>
    <span class="watermark">CSDN @Gsning</span>
  </div>
</nav>
</body>
</html>
```
FILE: styles.css
```css
* { box-sizing: border-box; }

:root {
  --mono: "DejaVu Sans Mono", "Noto Sans CJK SC", monospace;
  --wide: "Noto Sans Mono CJK SC", "Noto Sans CJK SC", monospace;
  --ui: "Noto Sans CJK SC", sans-serif;
  --edge: #82828c;
}

body {
  margin: 0;
  min-height: 100vh;
  display: flex;
  flex-direction: column;
  background: #efefef;
  color: #000;
  font-family: var(--ui);
}

button {
  margin: 0;
  padding: 0;
  border: 0;
  background: none;
  color: inherit;
  font: inherit;
}

svg { display: block; }
.defs { position: absolute; width: 0; height: 0; }

/* Title bar */
.titlebar {
  display: flex;
  align-items: center;
  height: 34px;
  padding-left: 2px;
  background: #fff;
}
.app-icon { width: 26px; height: 26px; }
.title { margin: 0 0 0 4px; font-size: 18px; line-height: 34px; font-weight: 400; }
.window-controls { display: flex; margin-left: auto; padding-right: 2px; }
.win-btn { display: grid; place-items: center; width: 70px; height: 34px; }
.win-btn svg { width: 16px; height: 16px; }

/* Menu */
.menubar {
  display: flex;
  align-items: flex-start;
  gap: 2px;
  height: 45px;
  border-bottom: 2px solid #f5f5f5;
  background: #fff;
}
.menubar button { padding: 0 16px; font-size: 24px; line-height: 40px; white-space: nowrap; }
.menubar u { text-underline-offset: 3px; }

/* Tool bar */
.toolbar {
  display: flex;
  align-items: center;
  height: 50px;
  padding: 2px 0 0 3px;
  border-bottom: 2px solid #b8b8b8;
}
.toolbar button { display: grid; place-items: center; width: 46px; height: 43px; border: 1px solid transparent; }
.toolbar button svg { width: 32px; height: 32px; }
.toolbar .on { background: #c0dcf3; border-color: #90c8f6; }
.sep { width: 12px; padding-left: 4px; }
.sep::before { content: ""; display: block; width: 2px; height: 32px; background: #d0d0d0; }

/* Display filter */
.filterbar {
  display: flex;
  align-items: center;
  height: 48px;
  padding: 0 38px 0 4px;
  border-top: 2px solid #fafafa;
  border-bottom: 2px solid #b8b8b8;
  margin-bottom: 1px;
}
.filter {
  display: flex;
  flex: 1;
  align-items: center;
  height: 36px;
  padding-left: 8px;
  border: 2px solid #646464;
  border-radius: 5px;
  background: #fff;
}
.bookmark { width: 27px; height: 32px; padding: 2px 0; border-right: 2px solid #646464; }
.bookmark svg { width: 16px; height: 28px; }
.filter-input {
  flex: 1;
  min-width: 0;
  height: 32px;
  padding: 0 7px;
  border: 0;
  outline: 0;
  background: none;
  font: 24px/32px var(--wide);
}
.filter-input::placeholder { color: #8c8c8c; opacity: 1; }
.apply { width: 48px; height: 28px; border-radius: 4px; background: linear-gradient(135deg, #8fb3dc, #6b9bd0); }
.recent { display: grid; place-items: center; width: 36px; height: 32px; padding-left: 8px; }
.recent svg { width: 14px; height: 8px; }
.add { margin-left: 12px; }
.add svg { width: 16px; height: 16px; }

/* Panes */
.panes { display: flex; flex: 1; flex-direction: column; gap: 10px; }
.pane {
  position: relative;
  display: flex;
  padding: 1px;
  border: 1px solid var(--edge);
  background: #fff;
}
.scroller { position: relative; flex: 1; min-width: 0; padding-bottom: 26px; }

.packets { width: 100%; table-layout: fixed; border-collapse: collapse; font-size: 18px; }
.c-no { width: 90px; }
.c-time { width: 122px; }
.c-src { width: 218px; }
.c-dst { width: 376px; }
.c-proto { width: 116px; }
.c-len { width: 92px; }
.packets th {
  height: 40px;
  padding: 0 0 0 8px;
  box-shadow: inset -1px 0 #e0e0e0;
  color: #1c1c1c;
  font: 24px/38px var(--wide);
  text-align: left;
}
.packets td {
  height: 28px;
  padding: 0 6px 4px;
  font-family: var(--mono);
  line-height: 24px;
  white-space: pre;
}
.packets td:nth-child(1), .packets td:nth-child(6) { text-align: right; }
.arp { background: #faf0d7; color: #12272e; }
.icmp { background: #fce0ff; color: #12272e; }
.icmp.current { background: #d6bfd9; }
.stp { color: #babdb6; }
.related { position: absolute; left: 0; top: 40px; width: 30px; height: 364px; }

.scrollbar { display: flex; flex-direction: column; flex: 0 0 24px; margin: 0 1px; background: #efefef; }
.arrow { width: 24px; height: 26px; }
.thumb { display: grid; place-items: center; flex: 1; background: #cdcdcd; }
.thumb i { width: 14px; height: 16px; background: #f0f0f0; }
.list-scroll .thumb { margin-top: 316px; }
.detail-scroll .thumb { margin-top: 24px; }

.tree { flex: 1; margin: 0; padding: 0; list-style: none; font: 18px/28px var(--mono); }
.tree li { display: flex; justify-content: flex-end; }
.tree svg { width: 20px; height: 28px; margin-right: 10px; }
.tree span { padding-left: 6px; white-space: pre; }
.top span { flex: 0 0 calc(100% - 40px); background: #efefef; }
.sub span { flex: 0 0 calc(100% - 80px); }
.hover span { background: #e5f3ff; }
.selected span { background: #cce8ff; }
.callout {
  position: absolute;
  left: -1px;
  top: 325px;
  width: 656px;
  height: 83px;
  border: 5px solid #ff2312;
  border-left-width: 3px;
  border-radius: 4px;
}

.bytes { flex: 1; background: linear-gradient(90deg, #efefef 67px, #fff 67px); }
.hex { align-self: flex-start; border-collapse: collapse; font: 18px/24px var(--mono); white-space: pre; }
.hex th { width: 77px; padding: 0 0 0 11px; color: #9a9a9a; font-weight: 400; text-align: left; }
.hex th.cur { color: #4a4a4a; }
.hex td { width: 275px; padding: 0; }
.hex td:nth-child(3) { width: 286px; }
.hex td:nth-child(4), .hex td:nth-child(5) { width: 99px; }
.hex s { color: #9a9a9a; text-decoration: none; }
.hex mark { display: inline-block; background: #0078d7; color: #fff; }

/* Status bar */
.statusbar { display: flex; align-items: center; height: 44px; font: 24px/32px var(--wide); white-space: pre; }
.comment { margin: 0 28px 0 20px; }
.comment svg { width: 28px; height: 28px; }
.field { flex: 1; }
.counts, .profile { position: relative; padding-left: 18px; border-left: 2px solid #a6a6a6; }
.counts::before, .profile::before { content: ""; position: absolute; left: -10px; top: 0; width: 2px; height: 32px; background: #a6a6a6; }
.counts { flex: 0 0 571px; margin-right: 8px; }
.profile { flex: 0 0 184px; }
.counts b { display: inline-block; width: 24px; font-weight: 400; text-align: center; }

/* Task bar */
.taskbar {
  display: flex;
  height: 46px;
  background: linear-gradient(90deg, #25272a 0, #292a2c 30%, #302625 42%, #22272d 45%, #24282e 68%, #343130 76%, #3b332d 80%, #292829 86%, #25272b 100%);
  color: #fff;
}
.start { display: grid; place-items: center; width: 54px; }
.start svg { width: 24px; height: 24px; }
.search {
  display: flex;
  align-items: center;
  width: 387px;
  padding-left: 16px;
  border: 2px solid #5a5a5a;
  border-right: 0;
  background: #333;
  color: #d8d8d8;
  font-size: 24px;
  line-height: 36px;
}
.search span { margin-left: 16px; }
.lens { width: 26px; height: 26px; }
.island { width: 92px; height: 42px; margin-left: auto; }
.apps { display: flex; margin-left: 4px; }
.apps button { position: relative; display: grid; place-items: center; width: 57px; }
.apps svg { width: 24px; height: 24px; }
.running::after { content: ""; position: absolute; left: 7px; right: 7px; bottom: 0; height: 3px; background: #76b9ed; }
.active { background: linear-gradient(90deg, #575350 49px, #3a3735 49px, #3a3735 51px, #4c4a49 51px); }
.active::after { left: 0; right: 0; }
.tray { position: relative; display: flex; align-items: center; gap: 12px; margin-left: auto; padding-right: 38px; }
.tray svg { width: 24px; height: 24px; }
.tray .t-chevron svg { width: 20px; }
.tray .t-kbd { width: 34px; }
.ime { font-size: 24px; line-height: 36px; }
.clock { margin: 0 18px 0 4px; font: 18px/24px "Noto Sans", sans-serif; }
.tray .note { height: 26px; }
.watermark { position: absolute; right: 16px; bottom: 8px; color: #b4b4b4; font: 12px/18px "Liberation Sans", sans-serif; }
```
